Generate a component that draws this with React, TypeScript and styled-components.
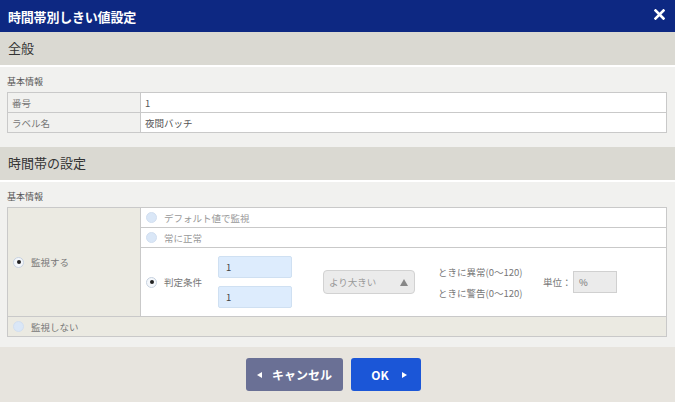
import React from 'react';
import styled, {createGlobalStyle} from 'styled-components';

const GlobalStyle = createGlobalStyle`
  html, body {
    margin: 0;
    padding: 0;
  }
  body {
    font-family: "Noto Sans CJK JP", "Noto Sans", sans-serif;
    color: #555;
  }
  * {
    box-sizing: border-box;
  }
`

const Radio = ({checked}: { checked?: boolean }) => <RadioMark $checked={checked}/>;

export default function App() {
    return (
        <Dialog>
            <GlobalStyle/>
            <TitleBar>
                <Title>時間帯別しきい値設定</Title>
                <Close>
                    <svg width="11" height="11" viewBox="0 0 11 11">
                        <path d="M1.5 1.5 L9.5 9.5 M9.5 1.5 L1.5 9.5" stroke="#fff" strokeWidth="2.6" strokeLinecap="square"/>
                    </svg>
                </Close>
            </TitleBar>

            <SectionHead>全般</SectionHead>
            <Panel $bottom={14}>
                <Caption>基本情報</Caption>
                <InfoTable>
                    <LabelCell>番号</LabelCell>
                    <ValueCell>1</ValueCell>
                    <LabelCell>ラベル名</LabelCell>
                    <ValueCell>夜間バッチ</ValueCell>
                </InfoTable>
            </Panel>

            <SectionHead>時間帯の設定</SectionHead>
            <Panel $bottom={10}>
                <Caption>基本情報</Caption>
                <ModeTable>
                    <MonitorCell>
                        <Radio checked/>
                        <span>監視する</span>
                    </MonitorCell>
                    <OptionCell>
                        <Radio/>
                        <span>デフォルト値で監視</span>
                    </OptionCell>
                    <OptionCell>
                        <Radio/>
                        <span>常に正常</span>
                    </OptionCell>
                    <ConditionCell>
                        <CondLabel>
                            <Radio checked/>
                            <span>判定条件</span>
                        </CondLabel>
                        <InputStack>
                            <NumberBox>1</NumberBox>
                            <NumberBox>1</NumberBox>
                        </InputStack>
                        <Select>
                            <span>より大きい</span>
                            <Caret/>
                        </Select>
                        <RangeStack>
                            <span>ときに異常(0～120)</span>
                            <span>ときに警告(0～120)</span>
                        </RangeStack>
                        <UnitLabel>単位：</UnitLabel>
                        <UnitBox>%</UnitBox>
                    </ConditionCell>
                    <OffCell>
                        <Radio/>
                        <span>監視しない</span>
                    </OffCell>
                </ModeTable>
            </Panel>

            <Footer>
                <Button $variant="cancel">
                    <Arrow $dir="left"/>
                    キャンセル
                </Button>
                <Button $variant="ok">
                    OK
                    <Arrow $dir="right"/>
                </Button>
            </Footer>
        </Dialog>
    );
}

const Dialog = styled.div`
  width: 675px;
  height: 402px;
  background-color: #e7e4de;
  display: flex;
  flex-direction: column;
  overflow: hidden;
`
const TitleBar = styled.div`
  height: 32px;
  background-color: #0d2882;
  display: flex;
  align-items: center;
  justify-content: space-between;
  padding: 0 10px 0 8px;
`
const Title = styled.h1`
  margin: 0;
  color: #fff;
  font-size: 13px;
  font-weight: 700;
  letter-spacing: -0.2px;
`
const Close = styled.span`
  display: flex;
  width: 11px;
  height: 11px;
  margin-top: -4px;
`
const SectionHead = styled.div`
  height: 35px;
  background-color: #dad9d2;
  border-bottom: 2px solid #fff;
  display: flex;
  align-items: center;
  padding: 0 8px 2px;
  font-size: 13px;
  color: #333;
`
const Panel = styled.div<{ $bottom: number }>`
  background-color: #f1f1ef;
  padding: 8px 8px ${p => p.$bottom}px 7px;
`
const Caption = styled.div`
  height: 17px;
  font-size: 9px;
  line-height: 11px;
  padding-top: 1px;
  color: #555;
`
const InfoTable = styled.div`
  display: grid;
  grid-template-columns: 133px 1fr;
  grid-auto-rows: 20px;
  border-top: 1px solid #c9c9c9;
  border-left: 1px solid #c9c9c9;
  font-size: 9.5px;
`
const LabelCell = styled.div`
  background-color: #f1f1ef;
  border-right: 1px solid #c9c9c9;
  border-bottom: 1px solid #c9c9c9;
  display: flex;
  align-items: center;
  padding-left: 4px;
  color: #777;
`
const ValueCell = styled(LabelCell)`
  background-color: #fff;
  padding-left: 4px;
  color: #555;
`
const ModeTable = styled.div`
  display: grid;
  grid-template-columns: 133px 1fr;
  grid-template-rows: 20px 20px 69px 20px;
  border-top: 1px solid #c9c9c9;
  border-left: 1px solid #c9c9c9;
  font-size: 9.5px;
  color: #777;
`
const Cell = styled.div`
  border-right: 1px solid #c9c9c9;
  border-bottom: 1px solid #c9c9c9;
  display: flex;
  align-items: center;
  gap: 7px;
`
const MonitorCell = styled(Cell)`
  grid-row: 1 / 4;
  background-color: #ebeae2;
  padding-left: 5px;
`
const OptionCell = styled(Cell)`
  background-color: #fff;
  padding-left: 5px;
  color: #999;
`
const ConditionCell = styled(Cell)`
  background-color: #fff;
  padding-left: 5px;
  gap: 0;
`
const OffCell = styled(Cell)`
  grid-column: 1 / 3;
  background-color: #ebeae2;
  padding-left: 5px;
`
const RadioMark = styled.span<{ $checked?: boolean }>`
  width: 11px;
  height: 11px;
  border-radius: 50%;
  flex-shrink: 0;
  background-color: ${p => p.$checked ? '#f4f7fb' : '#dae7f7'};
  border: 1px solid ${p => p.$checked ? '#c7d2e0' : '#d2dff0'};
  display: flex;
  align-items: center;
  justify-content: center;

  &::after {
    content: '';
    display: ${p => p.$checked ? 'block' : 'none'};
    width: 4px;
    height: 4px;
    border-radius: 50%;
    background-color: #222;
  }
`
const CondLabel = styled.div`
  width: 72px;
  display: flex;
  align-items: center;
  gap: 7px;
`
const InputStack = styled.div`
  display: flex;
  flex-direction: column;
  gap: 8px;
  width: 74px;
`
const NumberBox = styled.div`
  height: 22px;
  background-color: #ddecfd;
  border: 1px solid #cfe0f2;
  border-radius: 2px;
  padding: 0 7px;
  display: flex;
  align-items: center;
  color: #444;
  font-size: 9.5px;
`
const Select = styled.div`
  margin-left: 31px;
  width: 92px;
  height: 24px;
  background-color: #ebebeb;
  border: 1px solid #d2d2d2;
  border-radius: 4px;
  display: flex;
  align-items: center;
  justify-content: space-between;
  padding: 0 6px 0 5px;
  color: #999;
`
const Caret = styled.span`
  width: 0;
  height: 0;
  border-left: 4.5px solid transparent;
  border-right: 4.5px solid transparent;
  border-bottom: 7px solid #888;
`
const RangeStack = styled.div`
  margin-left: 23px;
  display: flex;
  flex-direction: column;
  gap: 7px;
  width: 105px;
  color: #777;
`
const UnitLabel = styled.span`
  width: 30px;
  color: #777;
`
const UnitBox = styled.div`
  width: 44px;
  height: 22px;
  background-color: #ebebeb;
  border: 1px solid #d0d0d0;
  display: flex;
  align-items: center;
  padding-left: 5px;
  color: #777;
`
const Footer = styled.div`
  display: flex;
  justify-content: center;
  gap: 8px;
  padding: 11px 8px 0 0;
`
const Button = styled.div<{ $variant: 'cancel' | 'ok' }>`
  height: 33px;
  width: ${p => p.$variant === 'cancel' ? '97px' : '70px'};
  border-radius: 3px;
  background-color: ${p => p.$variant === 'cancel' ? '#6a7095' : '#1b56d7'};
  color: #fff;
  font-size: 12px;
  font-weight: 700;
  display: flex;
  align-items: center;
  justify-content: center;
  gap: ${p => p.$variant === 'cancel' ? '10px' : '13px'};
  padding-left: ${p => p.$variant === 'ok' ? '6px' : '0'};
`
const Arrow = styled.span<{ $dir: 'left' | 'right' }>`
  width: 0;
  height: 0;
  border-top: 3.5px solid transparent;
  border-bottom: 3.5px solid transparent;
  ${p => p.$dir === 'left' ? 'border-right: 5px solid #fff;' : 'border-left: 5px solid #fff;'}
`
